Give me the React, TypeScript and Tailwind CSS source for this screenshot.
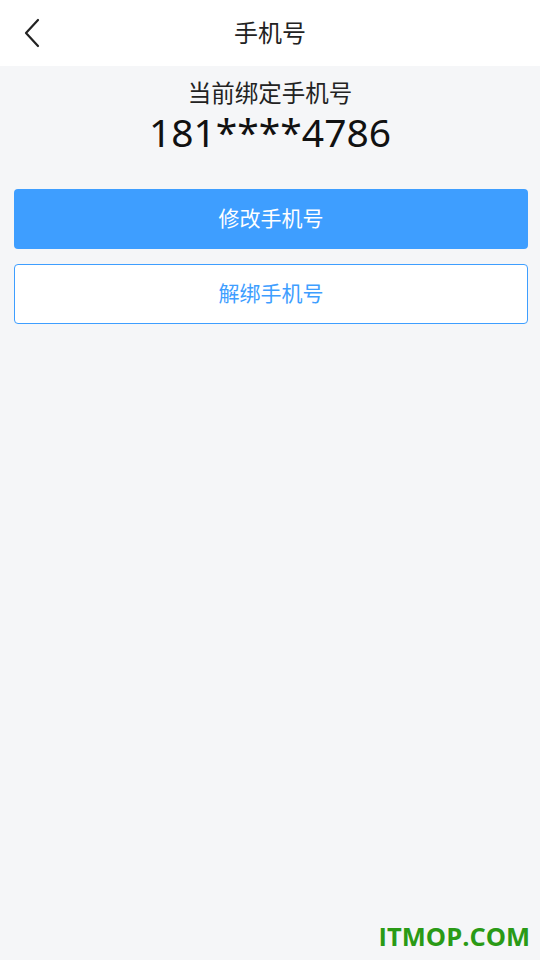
export default function App() {
  return (
    <div
      className="relative w-[540px] h-[960px] bg-[#f5f6f8] flex flex-col"
      style={{ fontFamily: '"Noto Sans", "Noto Sans CJK SC", sans-serif' }}
    >
      <div className="relative h-[66px] bg-white flex items-center justify-center">
        <button className="absolute left-[20px] top-[18px] w-[24px] h-[30px] flex items-center justify-center">
          <svg width="20" height="30" viewBox="0 0 20 30" fill="none">
            <path d="M16 2 L4 15 L16 28" stroke="#222" strokeWidth="2.2" strokeLinecap="round" strokeLinejoin="round" />
          </svg>
        </button>
        <h1 className="text-[24px] text-[#222] leading-none">手机号</h1>
      </div>

      <div className="flex flex-col items-center pt-[11px]">
        <p className="text-[23.5px] text-[#222] leading-[32px]">当前绑定手机号</p>
        <p className="text-[39px] text-[#111] leading-[46px]">181****4786</p>
      </div>

      <div className="flex flex-col gap-[15px] ml-[14px] mr-[12px] mt-[34px]">
        <button className="h-[60px] w-full rounded-[4px] bg-[#3e9eff] text-white text-[21px]">
          修改手机号
        </button>
        <button className="h-[60px] w-full rounded-[4px] bg-white border border-[#3e9eff] text-[#3e9eff] text-[21px]">
          解绑手机号
        </button>
      </div>

      <div
        className="absolute right-[10px] bottom-[11px] text-[25.5px] font-bold text-[#2a9a16] leading-none"
        style={{ fontFamily: '"Open Sans", sans-serif' }}
      >
        ITMOP.COM
      </div>
    </div>
  )
}
